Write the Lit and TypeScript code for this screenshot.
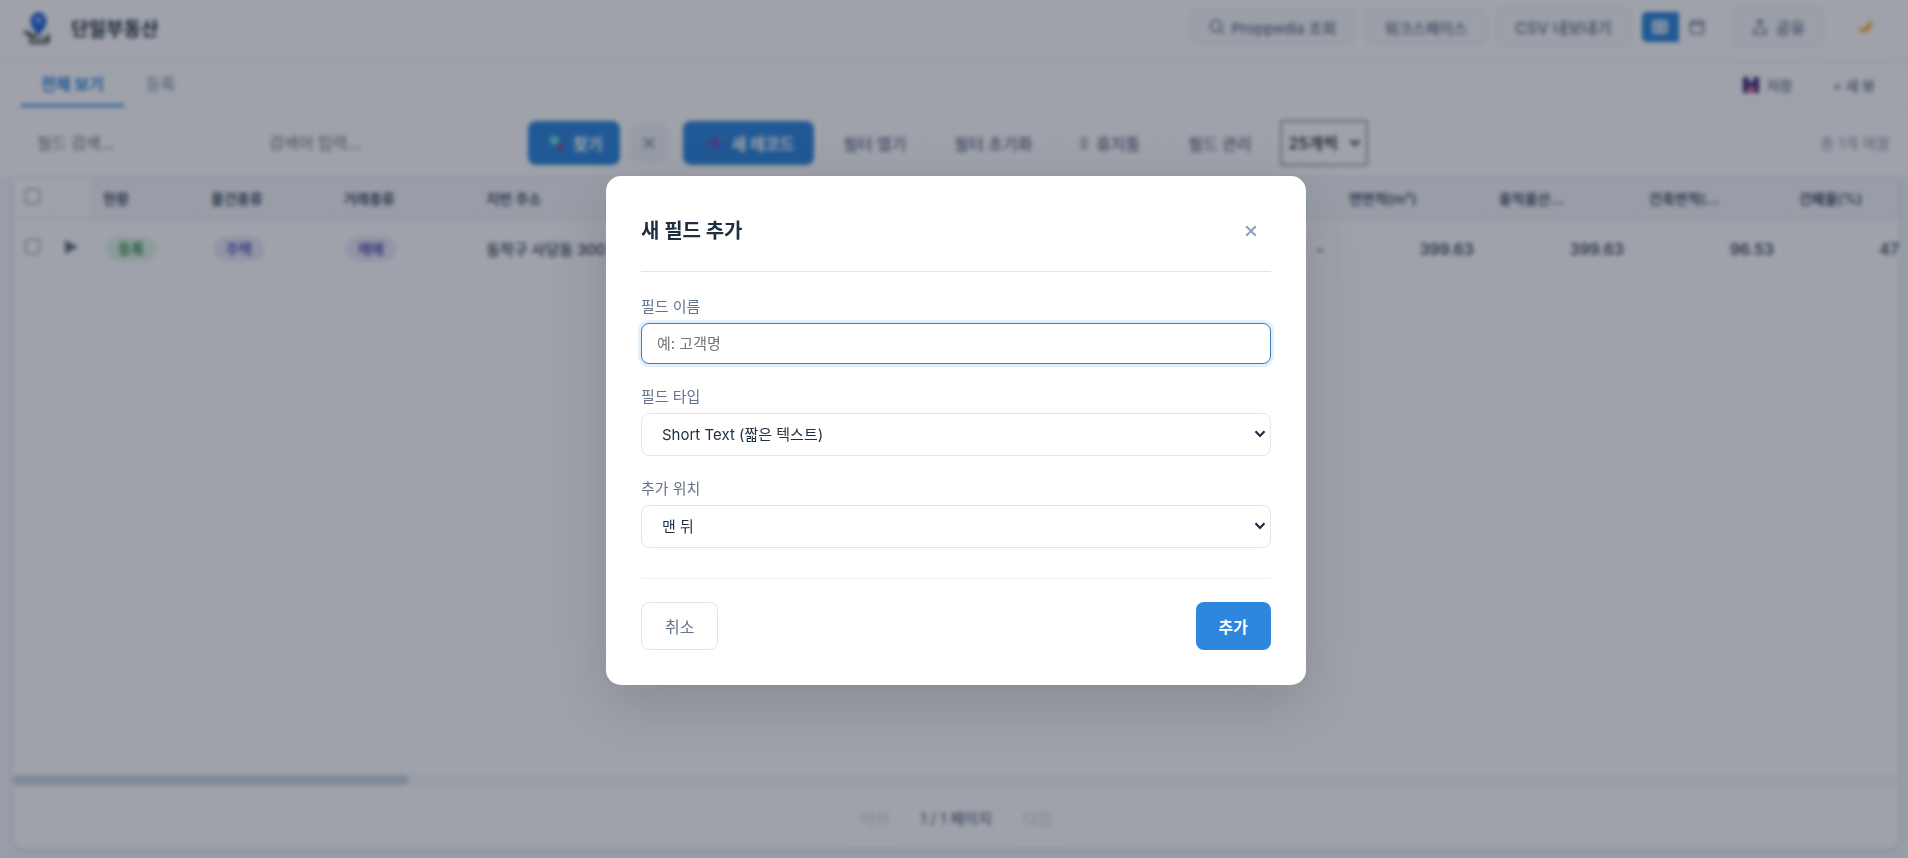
import { LitElement, html, css } from "lit";
import { customElement, state } from "lit/decorators.js";

interface Column {
  title: string;
  value: string;
  width: number;
  tone?: "green" | "violet";
  numeric?: boolean;
}

const COLUMNS: Column[] = [
  { title: "현황", value: "등록", width: 108, tone: "green" },
  { title: "물건종류", value: "주택", width: 132, tone: "violet" },
  { title: "거래종류", value: "매매", width: 143, tone: "violet" },
  { title: "지번 주소", value: "동작구 사당동 300", width: 260 },
  { title: "건물명", value: "-", width: 150 },
  { title: "동", value: "-", width: 150 },
  { title: "호", value: "-", width: 152 },
  { title: "대지면적(m²)", value: "-", width: 150, numeric: true },
  { title: "연면적(m²)", value: "399.63", width: 150, numeric: true },
  { title: "용적률산...", value: "399.63", width: 150, numeric: true },
  { title: "건축면적(...", value: "96.53", width: 150, numeric: true },
  { title: "건폐율(%)", value: "47", width: 112, numeric: true },
];

const chevron = css`url("data:image/svg+xml,%3Csvg xmlns='http://www.w3.org/2000/svg' width='12' height='8' viewBox='0 0 12 8' fill='none' stroke='%231e2f40' stroke-width='2.2'%3E%3Cpath d='M1.5 1.2L6 6l4.500-4.800'/%3E%3C/svg%3E")`;

@customElement("field-dialog")
export class FieldDialog extends LitElement {
  static styles = css`
    :host {
      position: fixed;
      inset: 0;
      display: grid;
      place-items: center;
      padding: 22px 20px 20px 24px;
      background: rgba(15, 23, 42, 0.4);
      backdrop-filter: blur(2px);
    }
    * {
      box-sizing: border-box;
      font-family: inherit;
    }
    .dialog {
      width: 100%;
      max-width: 700px;
      padding: 35px;
      border-radius: 15px;
      background: #fff;
      color: #1e2f40;
      box-shadow: 0 20px 60px rgba(0, 0, 0, 0.15);
    }
    .head {
      display: flex;
      align-items: center;
      justify-content: space-between;
      padding-bottom: 20px;
      border-bottom: 1px solid #dfe6ea;
    }
    h2 {
      margin: 0;
      font-size: 20px;
      line-height: 40px;
      font-weight: 700;
    }
    .close {
      display: grid;
      place-items: center;
      width: 40px;
      height: 40px;
      padding: 0;
      border: 0;
      background: none;
      color: #94a3b8;
    }
    .fields {
      display: grid;
      gap: 20px;
      padding: 23px 0 30px;
    }
    .field {
      display: grid;
      gap: 4px;
    }
    .field + .field {
      padding-top: 1px;
    }
    label {
      font-size: 15px;
      line-height: 24px;
      color: #64748b;
    }
    .control {
      width: 100%;
      border: 1px solid #dfe6ea;
      border-radius: 8px;
      background: #fff;
      color: #1e2f40;
      font-size: 15px;
    }
    input.control {
      height: 41px;
      padding: 0 15px;
      outline: none;
    }
    input.control:focus {
      border-color: #3a80ba;
      box-shadow: 0 0 0 3px #e3f0fb;
    }
    .control::placeholder {
      color: #757575;
    }
    select.control {
      height: 43px;
      padding: 0 24px 0 20px;
      appearance: none;
      background: #fff ${chevron} no-repeat right 4px center;
    }
    .foot {
      display: flex;
      justify-content: space-between;
      padding-top: 23px;
      border-top: 1px solid #eef2f5;
    }
    .btn {
      height: 48px;
      padding: 0 23px;
      border: 1px solid #dfe6ea;
      border-radius: 8px;
      background: #fff;
      color: #64748b;
      font-size: 16px;
    }
    .primary {
      border: 0;
      background: #2e86de;
      color: #fff;
      font-weight: 700;
    }
  `;

  firstUpdated() {
    this.renderRoot.querySelector("input")?.focus();
  }

  render() {
    return html`
      <div class="dialog" role="dialog" aria-modal="true" aria-labelledby="title">
        <div class="head">
          <h2 id="title">새 필드 추가</h2>
          <button class="close" aria-label="닫기">
            <svg width="12" height="12" viewBox="0 0 12 12" fill="none" stroke="currentColor" stroke-width="2.200">
              <path d="M1.200 1.200l9.600 9.600M10.800 1.200l-9.600 9.600" />
            </svg>
          </button>
        </div>
        <div class="fields">
          <div class="field">
            <label for="name">필드 이름</label>
            <input class="control" id="name" type="text" placeholder="예: 고객명" />
          </div>
          <div class="field">
            <label for="type">필드 타입</label>
            <select class="control" id="type">
              <option>Short Text (짧은 텍스트)</option>
            </select>
          </div>
          <div class="field">
            <label for="position">추가 위치</label>
            <select class="control" id="position">
              <option>맨 뒤</option>
            </select>
          </div>
        </div>
        <div class="foot">
          <button class="btn">취소</button>
          <button class="btn primary">추가</button>
        </div>
      </div>
    `;
  }
}

@customElement("listing-table")
export class ListingTable extends LitElement {
  static styles = css`
    :host {
      display: flex;
      flex-direction: column;
      flex: 1;
      min-height: 0;
      margin: 0 8px 9px 12px;
      border: 1px solid #e2e8f0;
      border-radius: 0 0 12px 12px;
      background: #fff;
      box-shadow: 0 2px 6px rgba(15, 23, 42, 0.08);
      overflow: hidden;
    }
    * {
      box-sizing: border-box;
      font-family: inherit;
    }
    .scroll {
      flex: 1;
      min-height: 0;
      overflow: hidden;
    }
    table {
      table-layout: fixed;
      width: 100%;
      border-collapse: separate;
      border-spacing: 0;
    }
    .select-col,
    .open-col {
      width: 39px;
    }
    th,
    td {
      padding: 0 12px;
      border-right: 1px solid #f2f4f8;
      text-align: left;
      white-space: nowrap;
    }
    th {
      height: 41px;
      border-bottom: 1px solid #dde3ea;
      background: #f5f7fa;
      color: #475569;
      font-size: 14px;
      font-weight: 600;
    }
    td {
      height: 60px;
      border-bottom: 1px solid #f4f6f9;
      color: #334155;
      font-size: 15px;
      font-weight: 500;
    }
    td.numeric {
      text-align: right;
      font-size: 16px;
    }
    td:last-child {
      padding-right: 0;
      border-right: 0;
    }
    .tick {
      padding: 0;
      text-align: center;
      background: #fff;
    }
    .tick input {
      width: 15px;
      height: 15px;
      margin: 0;
    }
    .open {
      padding: 0;
      border: 0;
      background: none;
      color: #64748b;
    }
    .badge {
      display: inline-block;
      margin-left: 3px;
      padding: 0 12px;
      border-radius: 12px;
      font-size: 14px;
      line-height: 24px;
      font-weight: 700;
    }
    .green {
      background: #e2f4e5;
      color: #3b9150;
    }
    .violet {
      background: #e8e9f8;
      color: #5f5cb8;
    }
    .track {
      height: 12px;
      background: #f5f7fa;
    }
    .thumb {
      width: 21%;
      height: 10px;
      border-radius: 5px;
      background: #cbd5e1;
    }
    .pager {
      display: flex;
      align-items: center;
      justify-content: center;
      gap: 15px;
      height: 61px;
      font-size: 15px;
      font-weight: 500;
      color: #64748b;
    }
    .pager button {
      height: 42px;
      padding: 0 15px;
      border: 1px solid #f4f6f9;
      border-radius: 8px;
      background: #fff;
      color: #c8ced8;
      font-size: 16px;
    }
  `;

  render() {
    return html`
      <div class="scroll">
        <table>
          <colgroup>
            <col class="select-col" />
            <col class="open-col" />
            ${COLUMNS.map((c) => html`<col style="width:${c.width}px" />`)}
          </colgroup>
          <thead>
            <tr>
              <th class="tick"><input type="checkbox" aria-label="전체 선택" /></th>
              <th class="tick"></th>
              ${COLUMNS.map((c) => html`<th>${c.title}</th>`)}
            </tr>
          </thead>
          <tbody>
            <tr>
              <td class="tick"><input type="checkbox" aria-label="행 선택" /></td>
              <td class="tick">
                <button class="open" aria-label="열기">
                  <svg width="14" height="14" viewBox="0 0 14 14" fill="currentColor"><path d="M1 0l13 7-13 7z" /></svg>
                </button>
              </td>
              ${COLUMNS.map(
                (c) => html`<td class=${c.numeric ? "numeric" : ""}>
                  ${c.tone ? html`<span class="badge ${c.tone}">${c.value}</span>` : c.value}
                </td>`,
              )}
            </tr>
          </tbody>
        </table>
      </div>
      <div class="track"><div class="thumb"></div></div>
      <div class="pager">
        <button disabled>이전</button>
        <span>1 / 1 페이지</span>
        <button disabled>다음</button>
      </div>
    `;
  }
}

@customElement("app-root")
export class AppRoot extends LitElement {
  @state() private dialogOpen = true;

  static styles = css`
    :host {
      display: flex;
      flex-direction: column;
      height: 100vh;
      overflow: hidden;
      background: #f5f7fa;
      color: #1e2f40;
      font-family: Inter, "Noto Sans CJK KR", sans-serif;
      font-size: 15px;
    }
    * {
      box-sizing: border-box;
      font-family: inherit;
    }
    svg {
      flex: none;
    }
    .header,
    .tabs,
    .toolbar {
      display: flex;
      align-items: center;
      flex: none;
      background: #fff;
      white-space: nowrap;
    }
    .header {
      gap: 10px;
      height: 62px;
      padding: 0 12px 6px 20px;
      border-bottom: 2px solid #eceef8;
    }
    h1 {
      flex: 1;
      margin: 0 0 0 7px;
      font-size: 19px;
      font-weight: 700;
    }
    .btn {
      display: inline-flex;
      align-items: center;
      justify-content: center;
      gap: 8px;
      height: 42px;
      padding: 0 18px;
      border: 1px solid #e6eaf1;
      border-radius: 8px;
      background: #fff;
      color: #64748b;
      font-size: 16px;
      font-weight: 500;
    }
    .header .btn {
      height: 40px;
      background: #f8fafc;
    }
    .header .btn.compact {
      gap: 6px;
      height: 36px;
      font-size: 15px;
    }
    .toggle {
      display: flex;
      overflow: hidden;
      height: 32px;
      margin-right: 6px;
      border: 1px solid #f1f4f8;
      border-radius: 6px;
    }
    .toggle button {
      display: grid;
      place-items: center;
      width: 37px;
      padding: 0;
      border: 0;
      background: #fff;
      color: #64748b;
    }
    .toggle .on {
      background: #2e86de;
      color: #fff;
    }
    .moon {
      width: 62px;
      height: 40px;
      padding: 0;
      border: 0;
      background: none;
    }
    .tabs {
      gap: 2px;
      height: 46px;
      padding: 0 18px 0 21px;
      border-bottom: 1px solid #eef1f5;
    }
    .tab {
      align-self: stretch;
      padding: 0 20px;
      border: 0;
      border-bottom: 3px solid transparent;
      background: none;
      color: #94a3b8;
      font-size: 16px;
      font-weight: 500;
    }
    .tab.on {
      border-bottom-color: #4f9ce6;
      color: #2e86de;
      font-weight: 700;
    }
    .spacer {
      flex: 1;
    }
    .tabs .btn {
      height: 34px;
      margin-left: 8px;
      padding: 0 14px;
      border-color: #f1f4f8;
      font-size: 14px;
    }
    .toolbar {
      gap: 10px;
      height: 69px;
      padding: 0 18px 0 21px;
    }
    .search {
      height: 40px;
      padding: 0 15px;
      border: 1px solid #f1f4f8;
      border-radius: 8px;
      background: #fff;
      font-size: 16px;
    }
    .search::placeholder {
      color: #757575;
    }
    .by-field {
      width: 222px;
    }
    .by-word {
      width: 265px;
    }
    .toolbar .btn {
      border-color: #f1f4f8;
    }
    .toolbar .solid {
      height: 44px;
      border: 0;
      background: #2e86de;
      color: #fff;
      font-weight: 700;
    }
    .solid.find {
      padding: 0 18px 0 20px;
    }
    .solid.create {
      margin-left: 5px;
      padding: 0 20px 0 24px;
    }
    .toolbar .clear {
      width: 38px;
      height: 38px;
      padding: 0;
      background: #f1f4f8;
    }
    .page-size {
      width: 88px;
      height: 46px;
      padding: 0 20px 0 6px;
      appearance: none;
      border: 2px solid #a0a0a0;
      border-radius: 3px;
      background: #fff ${chevron} no-repeat right 5px center;
      color: #222;
      font-size: 16px;
      font-weight: 500;
    }
    .total {
      color: #94a3b8;
      font-size: 15px;
    }
  `;

  render() {
    return html`
      <header class="header">
        <svg width="34" height="36" viewBox="0 0 34 36">
          <path d="M2 22h6l4 3h5l-3 4-6-2zM9 28h18l2-6 1 10-3 3H9z" fill="#4a4a4a" />
          <path d="M10 29h16v4H10z" fill="#b9b9b9" />
          <path d="M18.500 27c-3-5-8-8-8-15a8 9 0 0 1 16 0c0 7-5 10-8 15z" fill="#2463dc" />
          <circle cx="18.500" cy="11" r="3.500" fill="#7fa9f5" />
        </svg>
        <h1>단일부동산</h1>
        <button class="btn compact">
          <svg width="16" height="16" viewBox="0 0 16 16" fill="none" stroke="currentColor" stroke-width="1.600">
            <circle cx="7" cy="7" r="5.500" /><path d="M11 11l4 4" />
          </svg>
          Proppedia 조회
        </button>
        <button class="btn compact">워크스페이스</button>
        <button class="btn">CSV 내보내기</button>
        <div class="toggle">
          <button class="on" aria-label="표 보기">
            <svg width="16" height="16" viewBox="0 0 16 16" fill="none" stroke="currentColor" stroke-width="2">
              <rect x="1.500" y="2" width="13" height="12" rx="1" /><path d="M1.500 6h13M1.500 10h13M8 2v12" />
            </svg>
          </button>
          <button aria-label="달력 보기">
            <svg width="16" height="16" viewBox="0 0 16 16" fill="none" stroke="currentColor" stroke-width="1.600">
              <rect x="1.500" y="2.500" width="13" height="12" rx="2" /><path d="M1.500 5.500h13M5 1v3M11 1v3" />
            </svg>
          </button>
        </div>
        <button class="btn">
          <svg width="16" height="18" viewBox="0 0 16 18" fill="none" stroke="currentColor" stroke-width="1.600">
            <path d="M8 12V2M4.500 5.500L8 2l3.500 3.500M3.500 9L2 16h12l-1.500-7" />
          </svg>
          공유
        </button>
        <button class="moon" aria-label="어두운 화면">
          <svg width="18" height="18" viewBox="0 0 18 18"><path d="M14 2a8 8 0 1 1-13 10A11 11 0 0 0 14 2z" fill="#f5a623" /></svg>
        </button>
      </header>
      <nav class="tabs">
        <button class="tab on">전체 보기</button>
        <button class="tab">등록</button>
        <span class="spacer"></span>
        <button class="btn">
          <svg width="16" height="16" viewBox="0 0 16 16">
            <path d="M0 0h16v16H0z" fill="#3d2a78" /><path d="M5 0h6v5H5z" fill="#d8d8ee" /><path d="M4 9h8v7H4z" fill="#d86a9a" />
          </svg>
          저장
        </button>
        <button class="btn">+ 새 뷰</button>
      </nav>
      <div class="toolbar">
        <input class="search by-field" type="text" aria-label="필드 검색" placeholder="필드 검색..." />
        <input class="search by-word" type="text" aria-label="검색어" placeholder="검색어 입력..." />
        <button class="btn solid find">
          <svg width="17" height="18" viewBox="0 0 17 18">
            <path d="M10 10l5 6" stroke="#b5305e" stroke-width="3" /><circle cx="6.500" cy="6.500" r="4.500" fill="#6fe0dc" />
          </svg>
          찾기
        </button>
        <button class="btn clear" aria-label="지우기">
          <svg width="12" height="12" viewBox="0 0 12 12" stroke="currentColor" stroke-width="1.500"><path d="M1 1l10 10M11 1L1 11" /></svg>
        </button>
        <button class="btn solid create">
          <svg width="16" height="16" viewBox="0 0 16 16" stroke="#8a48b0" stroke-width="3"><path d="M8 1v14M1 8h14" /></svg>
          새 레코드
        </button>
        <button class="btn">필터 열기</button>
        <button class="btn">필터 초기화</button>
        <button class="btn">
          <svg width="8" height="14" viewBox="0 0 8 14" fill="none" stroke="currentColor"><path d="M0 2.500h8M1.500 3v10h5V3M4 5v6" /></svg>
          휴지통
        </button>
        <button class="btn">필드 관리</button>
        <select class="page-size" aria-label="페이지 크기">
          <option>25개씩</option>
        </select>
        <span class="spacer"></span>
        <span class="total">총 1개 매물</span>
      </div>
      <listing-table></listing-table>
      ${this.dialogOpen ? html`<field-dialog></field-dialog>` : ""}
    `;
  }
}
